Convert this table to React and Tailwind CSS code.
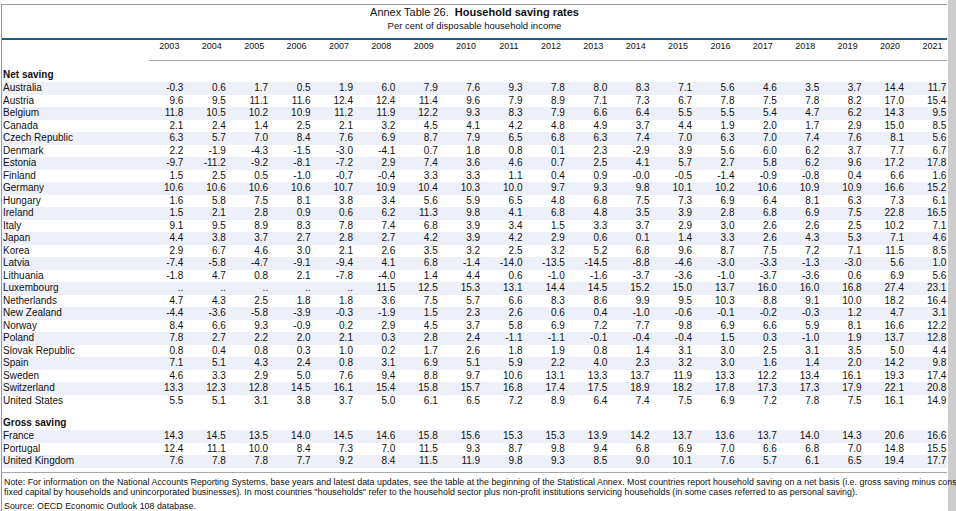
const years = [2003, 2004, 2005, 2006, 2007, 2008, 2009, 2010, 2011, 2012, 2013, 2014, 2015, 2016, 2017, 2018, 2019, 2020, 2021];

const netSaving = [
  ["Australia", "-0.3 0.6 1.7 0.5 1.9 6.0 7.9 7.6 9.3 7.8 8.0 8.3 7.1 5.6 4.6 3.5 3.7 14.4 11.7"],
  ["Austria", "9.6 9.5 11.1 11.6 12.4 12.4 11.4 9.6 7.9 8.9 7.1 7.3 6.7 7.8 7.5 7.8 8.2 17.0 15.4"],
  ["Belgium", "11.8 10.5 10.2 10.9 11.2 11.9 12.2 9.3 8.3 7.9 6.6 6.4 5.5 5.5 5.4 4.7 6.2 14.3 9.5"],
  ["Canada", "2.1 2.4 1.4 2.5 2.1 3.2 4.5 4.1 4.2 4.8 4.9 3.7 4.4 1.9 2.0 1.7 2.9 15.0 8.5"],
  ["Czech Republic", "6.3 5.7 7.0 8.4 7.6 6.9 8.7 7.9 6.5 6.8 6.3 7.4 7.0 6.3 7.0 7.4 7.6 8.1 5.6"],
  ["Denmark", "2.2 -1.9 -4.3 -1.5 -3.0 -4.1 0.7 1.8 0.8 0.1 2.3 -2.9 3.9 5.6 6.0 6.2 3.7 7.7 6.7"],
  ["Estonia", "-9.7 -11.2 -9.2 -8.1 -7.2 2.9 7.4 3.6 4.6 0.7 2.5 4.1 5.7 2.7 5.8 6.2 9.6 17.2 17.8"],
  ["Finland", "1.5 2.5 0.5 -1.0 -0.7 -0.4 3.3 3.3 1.1 0.4 0.9 -0.0 -0.5 -1.4 -0.9 -0.8 0.4 6.6 1.6"],
  ["Germany", "10.6 10.6 10.6 10.6 10.7 10.9 10.4 10.3 10.0 9.7 9.3 9.8 10.1 10.2 10.6 10.9 10.9 16.6 15.2"],
  ["Hungary", "1.6 5.8 7.5 8.1 3.8 3.4 5.6 5.9 6.5 4.8 6.8 7.5 7.3 6.9 6.4 8.1 6.3 7.3 6.1"],
  ["Ireland", "1.5 2.1 2.8 0.9 0.6 6.2 11.3 9.8 4.1 6.8 4.8 3.5 3.9 2.8 6.8 6.9 7.5 22.8 16.5"],
  ["Italy", "9.1 9.5 8.9 8.3 7.8 7.4 6.8 3.9 3.4 1.5 3.3 3.7 2.9 3.0 2.6 2.6 2.5 10.2 7.1"],
  ["Japan", "4.4 3.8 3.7 2.7 2.8 2.7 4.2 3.9 4.2 2.9 0.6 0.1 1.4 3.3 2.6 4.3 5.3 7.1 4.6"],
  ["Korea", "2.9 6.7 4.6 3.0 2.1 2.6 3.5 3.2 2.5 3.2 5.2 6.8 9.6 8.7 7.5 7.2 7.1 11.5 8.5"],
  ["Latvia", "-7.4 -5.8 -4.7 -9.1 -9.4 4.1 6.8 -1.4 -14.0 -13.5 -14.5 -8.8 -4.6 -3.0 -3.3 -1.3 -3.0 5.6 1.0"],
  ["Lithuania", "-1.8 4.7 0.8 2.1 -7.8 -4.0 1.4 4.4 0.6 -1.0 -1.6 -3.7 -3.6 -1.0 -3.7 -3.6 0.6 6.9 5.6"],
  ["Luxembourg", ".. .. .. .. .. 11.5 12.5 15.3 13.1 14.4 14.5 15.2 15.0 13.7 16.0 16.0 16.8 27.4 23.1"],
  ["Netherlands", "4.7 4.3 2.5 1.8 1.8 3.6 7.5 5.7 6.6 8.3 8.6 9.9 9.5 10.3 8.8 9.1 10.0 18.2 16.4"],
  ["New Zealand", "-4.4 -3.6 -5.8 -3.9 -0.3 -1.9 1.5 2.3 2.6 0.6 0.4 -1.0 -0.6 -0.1 -0.2 -0.3 1.2 4.7 3.1"],
  ["Norway", "8.4 6.6 9.3 -0.9 0.2 2.9 4.5 3.7 5.8 6.9 7.2 7.7 9.8 6.9 6.6 5.9 8.1 16.6 12.2"],
  ["Poland", "7.8 2.7 2.2 2.0 2.1 0.3 2.8 2.4 -1.1 -1.1 -0.1 -0.4 -0.4 1.5 0.3 -1.0 1.9 13.7 12.8"],
  ["Slovak Republic", "0.8 0.4 0.8 0.3 1.0 0.2 1.7 2.6 1.8 1.9 0.8 1.4 3.1 3.0 2.5 3.1 3.5 5.0 4.4"],
  ["Spain", "7.1 5.1 4.3 2.4 0.8 3.1 6.9 5.1 5.9 2.2 4.0 2.3 3.2 3.0 1.6 1.4 2.0 14.2 9.8"],
  ["Sweden", "4.6 3.3 2.9 5.0 7.6 9.4 8.8 9.7 10.6 13.1 13.3 13.7 11.9 13.3 12.2 13.4 16.1 19.3 17.4"],
  ["Switzerland", "13.3 12.3 12.8 14.5 16.1 15.4 15.8 15.7 16.8 17.4 17.5 18.9 18.2 17.8 17.3 17.3 17.9 22.1 20.8"],
  ["United States", "5.5 5.1 3.1 3.8 3.7 5.0 6.1 6.5 7.2 8.9 6.4 7.4 7.5 6.9 7.2 7.8 7.5 16.1 14.9"],
];

const grossSaving = [
  ["France", "14.3 14.5 13.5 14.0 14.5 14.6 15.8 15.6 15.3 15.3 13.9 14.2 13.7 13.6 13.7 14.0 14.3 20.6 16.6"],
  ["Portugal", "12.4 11.1 10.0 8.4 7.3 7.0 11.5 9.3 8.7 9.8 9.4 6.8 6.9 7.0 6.6 6.8 7.0 14.8 15.5"],
  ["United Kingdom", "7.6 7.8 7.8 7.7 9.2 8.4 11.5 11.9 9.8 9.3 8.5 9.0 10.1 7.6 5.7 6.1 6.5 19.4 17.7"],
];

function Row({ label, values, striped }) {
  return (
    <div className={striped ? "grid grid-cols-[139px_repeat(19,42.4px)] h-[12.5px] leading-[12.5px] bg-[#edf0f8]" : "grid grid-cols-[139px_repeat(19,42.4px)] h-[12.5px] leading-[12.5px]"}>
      <div className="pl-[1px] whitespace-nowrap">{label}</div>
      {values.split(" ").map((v, i) => (
        <div key={i} className="text-right">{v}</div>
      ))}
    </div>
  );
}

export default function App() {
  return (
    <div className="flex h-[511px] overflow-hidden bg-white text-[10px] text-[#111] font-['Liberation_Sans',Arial,sans-serif]">
      <div className="mt-[4px] ml-[1px] w-[946px] shrink-0 border-l border-t border-[#9a9a9a]">
        <div className="h-[15px] text-center text-[11px] leading-[15px]">
          Annex Table 26.&nbsp; <span className="font-bold">Household saving rates</span>
        </div>
        <div className="h-[11px] text-center text-[9.5px] leading-[11px]">
          Per cent of disposable household income
        </div>
        <div className="mt-[7px] h-[2px] bg-[#1f5a80]" />

        <div className="grid grid-cols-[139px_repeat(19,42.4px)] h-[12px] leading-[12px] text-[9px] font-['Liberation_Sans_Narrow','Liberation_Sans',sans-serif]">
          <div />
          {years.map((y) => (
            <div key={y} className="pr-[4px] text-right">{y}</div>
          ))}
        </div>
        <div className="mt-[8px] ml-[147px] h-px bg-[#a8a8a8]" />

        <div className="mt-[7px] h-[14px] pl-[1px] font-bold leading-[14px]">Net saving</div>
        {netSaving.map(([label, values], i) => (
          <Row key={label} label={label} values={values} striped={i % 2 === 0} />
        ))}

        <div className="mt-[9px] h-[14px] pl-[1px] font-bold leading-[14px]">Gross saving</div>
        {grossSaving.map(([label, values], i) => (
          <Row key={label} label={label} values={values} striped={i % 2 === 0} />
        ))}

        <div className="mt-[4px] border-t border-[#a8a8a8] pt-[4px] pl-[2px] text-[8.9px] leading-[10px]">
          <div className="relative z-10 whitespace-nowrap">
            Note: For information on the National Accounts Reporting Systems, base years and latest data updates, see the table at the beginning of the Statistical Annex. Most countries report household saving on a net basis (i.e. gross saving minus consumption of
          </div>
          <div className="whitespace-nowrap">
            fixed capital by households and unincorporated businesses). In most countries "households" refer to the household sector plus non-profit institutions servicing households (in some cases referred to as personal saving).
          </div>
          <div className="mt-[4px]">Source: OECD Economic Outlook 108 database.</div>
        </div>
      </div>
      <div className="flex-1 border-l border-white bg-[#cdcdcd]" />
    </div>
  );
}
